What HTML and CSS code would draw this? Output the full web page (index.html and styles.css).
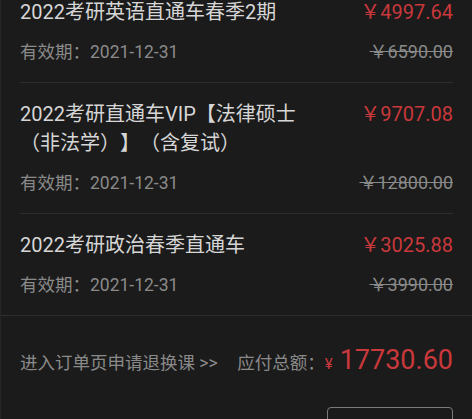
FILE: index.html
```html
<!DOCTYPE html>
<html lang="zh-CN">
<head>
<meta charset="utf-8">
<title>订单</title>
<link rel="stylesheet" href="styles.css">
</head>
<body>
<div class="page">
  <div class="list">
    <div class="item">
      <div class="row">
        <div class="title">2022考研英语直通车春季2期</div>
        <div class="price">￥4997.64</div>
      </div>
      <div class="row sub">
        <div class="valid">有效期：2021-12-31</div>
        <div class="orig">￥6590.00</div>
      </div>
    </div>
    <div class="item">
      <div class="row">
        <div class="title">2022考研直通车VIP【法律硕士（非法学）】（含复试）</div>
        <div class="price">￥9707.08</div>
      </div>
      <div class="row sub">
        <div class="valid">有效期：2021-12-31</div>
        <div class="orig">￥12800.00</div>
      </div>
    </div>
    <div class="item last">
      <div class="row">
        <div class="title">2022考研政治春季直通车</div>
        <div class="price">￥3025.88</div>
      </div>
      <div class="row sub">
        <div class="valid">有效期：2021-12-31</div>
        <div class="orig">￥3990.00</div>
      </div>
    </div>
  </div>
  <div class="footer">
    <div class="total-row">
      <div class="refund">进入订单页申请退换课 &gt;&gt;</div>
      <div class="total">
        <span class="total-label">应付总额：</span><span class="total-yen">¥</span><span class="total-num">17730.60</span>
      </div>
    </div>
    <div class="actions">
      <button class="pay">立即支付</button>
    </div>
  </div>
</div>
</body>
</html>
```
FILE: styles.css
```css
html, body {
  margin: 0;
  padding: 0;
  background: #1b1b1b;
}
body {
  font-family: Roboto, "Noto Sans CJK SC", sans-serif;
  text-spacing-trim: space-all;
  overflow: hidden;
  height: 419px;
}
.page {
  border-left: 1px solid #262626;
  min-height: 419px;
  box-sizing: border-box;
}
.list {
  margin-top: -19px;
  border-bottom: 1px solid #2e2e2e;
}
.item {
  margin: 0 19px 0 19px;
  padding: 17px 0 18px 0;
  border-bottom: 1px solid #2e2e2e;
}
.item.last {
  border-bottom: none;
}
.row {
  display: flex;
  justify-content: space-between;
  align-items: flex-start;
}
.title {
  width: 286px;
  font-size: 20px;
  line-height: 29px;
  color: #d6d6d6;
}
.price {
  font-size: 20px;
  line-height: 29px;
  color: #c9383b;
  white-space: nowrap;
}
.row.sub {
  margin-top: 13px;
  align-items: center;
}
.valid {
  font-size: 17.5px;
  line-height: 24px;
  color: #8a8a8a;
}
.orig {
  font-size: 18px;
  line-height: 24px;
  color: #8a8a8a;
  text-decoration: line-through;
  white-space: nowrap;
}
.footer {
  padding: 26px 19px 0 19px;
}
.total-row {
  display: flex;
  justify-content: space-between;
  align-items: baseline;
  line-height: 36px;
}
.refund {
  font-size: 17.5px;
  color: #8a8a8a;
}
.total {
  white-space: nowrap;
}
.total-label {
  font-size: 17.5px;
  color: #8a8a8a;
}
.total-yen {
  font-size: 15px;
  color: #c9383b;
  margin: 0 7px 0 0;
}
.total-num {
  font-size: 27px;
  color: #c9383b;
}
.actions {
  display: flex;
  justify-content: flex-end;
  margin-top: 25px;
}
.pay {
  width: 126px;
  height: 38px;
  background: transparent;
  border: 1px solid #7a7a7a;
  border-radius: 4px;
  color: #e0e0e0;
  font-family: Roboto, "Noto Sans CJK SC", sans-serif;
  font-size: 17px;
  padding: 0;
}
```
